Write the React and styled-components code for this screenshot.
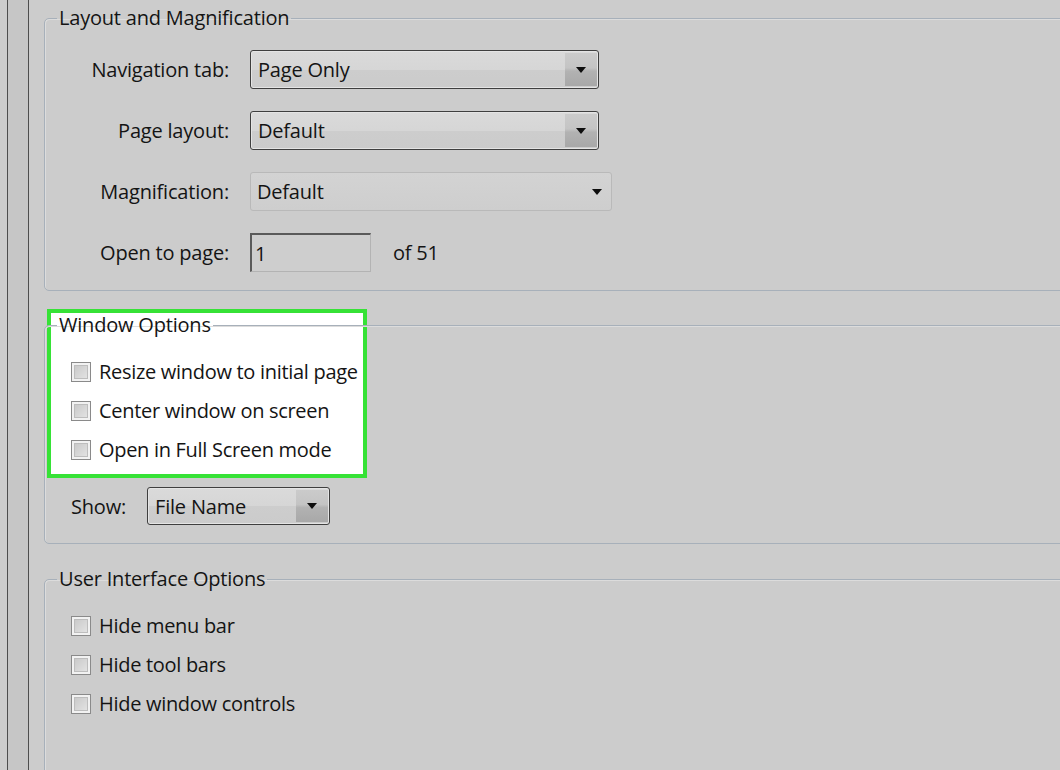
import React from 'react';
import styled, { createGlobalStyle } from 'styled-components';

const GlobalStyle = createGlobalStyle`
  html {
    background: #cccccc;
  }
  body {
    margin: 0;
    padding: 0;
    font-family: 'Open Sans', 'Noto Sans', sans-serif;
    color: #141414;
    overflow: hidden;
  }
`;

const Arrow = () => (
  <svg width="10" height="6" viewBox="0 0 10 6">
    <polygon points="0,0 10,0 5,6" fill="#0d0d0d" />
  </svg>
);

const App = () => {
  return (
    <>
      <GlobalStyle />
      <Screen>
        <Rail />
        <Content>
          <Group>
            <Legend>Layout and Magnification</Legend>
            <FormGrid>
              <Label>Navigation tab:</Label>
              <Select>
                <SelectText>Page Only</SelectText>
                <DropButton>
                  <Arrow />
                </DropButton>
              </Select>

              <Label>Page layout:</Label>
              <Select>
                <SelectText>Default</SelectText>
                <DropButton>
                  <Arrow />
                </DropButton>
              </Select>

              <Label>Magnification:</Label>
              <FlatSelect>
                <SelectText>Default</SelectText>
                <Arrow />
              </FlatSelect>

              <Label>Open to page:</Label>
              <PageRow>
                <PageInput>1</PageInput>
                <OfText>of 51</OfText>
              </PageRow>
            </FormGrid>
          </Group>

          <Group $gap={22}>
            <Highlight />
            <Legend>Window Options</Legend>
            <CheckList>
              <CheckRow>
                <CheckBox />
                Resize window to initial page
              </CheckRow>
              <CheckRow>
                <CheckBox />
                Center window on screen
              </CheckRow>
              <CheckRow>
                <CheckBox />
                Open in Full Screen mode
              </CheckRow>
            </CheckList>
            <ShowRow>
              <span>Show:</span>
              <Select $width={183} $height={38}>
                <SelectText>File Name</SelectText>
                <DropButton>
                  <Arrow />
                </DropButton>
              </Select>
            </ShowRow>
          </Group>

          <Group $gap={23} $tall>
            <Legend>User Interface Options</Legend>
            <CheckList>
              <CheckRow>
                <CheckBox />
                Hide menu bar
              </CheckRow>
              <CheckRow>
                <CheckBox />
                Hide tool bars
              </CheckRow>
              <CheckRow>
                <CheckBox />
                Hide window controls
              </CheckRow>
            </CheckList>
          </Group>
        </Content>
      </Screen>
    </>
  );
};

export default App;

const Screen = styled.div`
  display: flex;
  height: 770px;
  width: 1060px;
  overflow: hidden;
  isolation: isolate;
`;

const Rail = styled.div`
  flex: none;
  width: 20px;
  margin-left: 7px;
  border-left: 1px solid #4d4d4d;
  border-right: 1px solid #4d4d4d;
  background: #c6c6c6;
`;

const Content = styled.div`
  flex: none;
  width: 1100px;
  padding-left: 15px;
  padding-top: 6px;
`;

const Group = styled.fieldset`
  position: relative;
  margin: ${(p) => p.$gap || 0}px 0 0 0;
  padding: 0 12px ${(p) => (p.$tall ? 200 : 18)}px 12px;
  border: 1px solid #a7b0ba;
  border-radius: 5px;
  box-shadow: inset 1px 1px 0 #dcdcdc;
  min-width: 0;
`;

const Legend = styled.legend`
  padding: 0 2px;
  font-size: 20px;
  line-height: 24px;
  letter-spacing: -0.2px;
`;

/* green annotation frame laid over the Window Options box */
const Highlight = styled.div`
  position: absolute;
  z-index: -1;
  left: 2px;
  top: -28px;
  width: 320px;
  height: 169px;
  box-sizing: border-box;
  border: 4px solid #36e236;
  background: #ffffff;
`;

const FormGrid = styled.div`
  display: grid;
  grid-template-columns: 172px auto;
  column-gap: 21px;
  row-gap: 22px;
  align-items: center;
  margin-top: 20px;
  font-size: 20px;
  letter-spacing: -0.2px;
`;

const Label = styled.div`
  text-align: right;
`;

const Select = styled.div`
  display: flex;
  align-items: stretch;
  box-sizing: border-box;
  width: ${(p) => p.$width || 349}px;
  height: ${(p) => p.$height || 39}px;
  border: 1px solid #3f3f3f;
  border-radius: 3px;
  box-shadow: inset 0 0 0 1px #e4e4e4;
  background: linear-gradient(#dadada 0%, #d6d6d6 50%, #cdcdcd 51%, #cbcbcb 100%);
  overflow: hidden;
`;

const SelectText = styled.div`
  flex: 1;
  display: flex;
  align-items: center;
  padding-left: 7px;
  font-size: 20px;
  letter-spacing: -0.2px;
`;

const DropButton = styled.div`
  flex: none;
  width: 32px;
  margin: 2px 1px 2px 0;
  display: flex;
  align-items: center;
  justify-content: center;
  background: linear-gradient(#cbcbcb 0%, #c4c4c4 45%, #b2b2b2 55%, #a8a8a8 100%);
`;

const FlatSelect = styled.div`
  display: flex;
  align-items: center;
  box-sizing: border-box;
  width: 362px;
  height: 39px;
  padding-right: 9px;
  border: 1px solid #b9b9b9;
  border-radius: 3px;
  background: linear-gradient(#d3d3d3, #cecece);

  ${SelectText} {
    padding-left: 6px;
  }
`;

const PageRow = styled.div`
  display: flex;
  align-items: center;
  gap: 22px;
`;

const PageInput = styled.div`
  box-sizing: border-box;
  width: 121px;
  height: 39px;
  display: flex;
  align-items: center;
  padding-left: 3px;
  border-top: 2px solid #5a5a5a;
  border-left: 2px solid #5a5a5a;
  border-right: 1px solid #b3b3b3;
  border-bottom: 1px solid #b3b3b3;
  background: #cecece;
  font-size: 20px;
`;

const OfText = styled.span`
  font-size: 20px;
  letter-spacing: -0.2px;
`;

const CheckList = styled.div`
  display: flex;
  flex-direction: column;
  margin-top: 15px;
  padding-left: 14px;
`;

const CheckRow = styled.label`
  display: flex;
  align-items: center;
  gap: 8px;
  height: 39px;
  font-size: 20px;
  letter-spacing: -0.3px;
`;

const CheckBox = styled.span`
  flex: none;
  box-sizing: border-box;
  width: 20px;
  height: 20px;
  border: 1px solid #8a8a8a;
  box-shadow: inset 0 0 0 2px #f2f2f2, inset 0 0 0 3px #bdbdbd;
  background: linear-gradient(135deg, #c4c4c4, #e8e8e8);
`;

const ShowRow = styled.div`
  display: flex;
  align-items: center;
  gap: 21px;
  margin-top: 18px;
  padding-left: 14px;
  font-size: 20px;
  letter-spacing: -0.2px;
`;
